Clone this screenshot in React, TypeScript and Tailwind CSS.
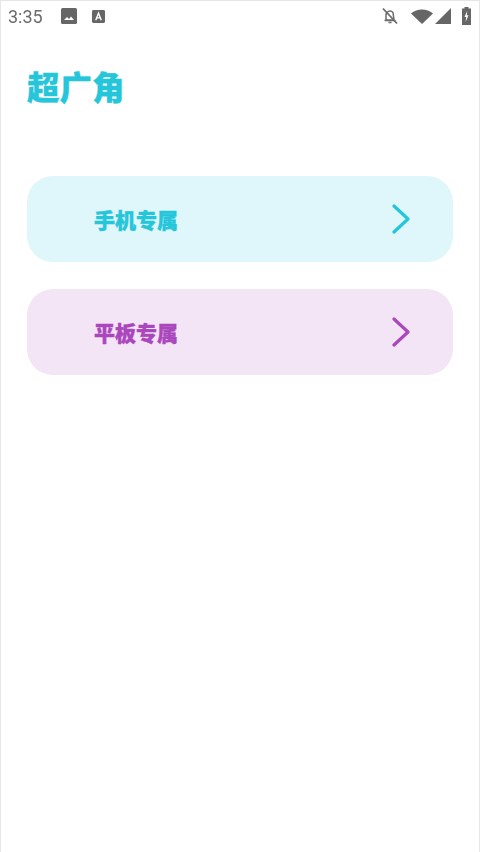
const cjk = "font-['Noto_Sans_CJK_SC','Noto_Sans',sans-serif]";

const Chevron = ({ className }: { className: string }) => (
  <svg viewBox="0 0 18 30" className={`w-[18px] h-[30px] ${className}`} fill="none" stroke="currentColor" strokeWidth="3.2" strokeLinecap="round" strokeLinejoin="round">
    <path d="M2 2 L16 15 L2 28" />
  </svg>
);

const StatusBar = () => (
  <div className="h-[32px] flex items-center pl-[7px] text-[#6b6b6b] blur-[0.5px]">
    <span className="w-[37px] text-[18px] font-['Roboto',sans-serif] leading-none">3:35</span>
    <svg viewBox="0 0 16 16" className="w-[16px] h-[16px] ml-[16px] mb-[2px]">
      <rect x="0" y="0" width="16" height="16" rx="1.5" fill="#666" />
      <path d="M3 12 L6 9 L8 11 L10 8.5 L13 12 Z" fill="#fff" />
    </svg>
    <svg viewBox="0 0 14 14" className="w-[13px] h-[13px] ml-[15px] mb-[2px]">
      <rect x="0" y="0" width="14" height="14" rx="1.5" fill="#666" />
      <path d="M4 11 L7 3.5 L10 11 M5.2 8.5 H8.8" fill="none" stroke="#fff" strokeWidth="1.5" />
    </svg>
    <div className="ml-auto flex items-center pr-[8px] mb-[2px]">
      <svg viewBox="0 0 18 18" className="w-[18px] h-[18px] mr-[12px]" fill="none" stroke="#6b6b6b" strokeWidth="1.5">
        <path d="M5 13 V8 a4 4 0 0 1 7-2.5 L13 13 Z M3.5 13.5 H14.5 M7.5 15.5 H10.5" />
        <path d="M2 1.5 L16 16.5" strokeWidth="1.8" />
      </svg>
      <svg viewBox="0 0 22 15" className="w-[22px] h-[15px]">
        <path d="M0 4.5 C6 -1 16 -1 22 4.5 L11 15 Z" fill="#666" />
      </svg>
      <svg viewBox="0 0 16 16" className="w-[16px] h-[16px] ml-[2px]">
        <path d="M16 0 V16 H0 Z" fill="#666" />
      </svg>
      <svg viewBox="0 0 9 18" className="w-[9px] h-[18px] ml-[11px]">
        <path d="M2.5 0 H6.5 V1.5 H9 V18 H0 V1.5 H2.5 Z" fill="#666" />
        <path d="M5.2 4 L2.5 10 H4.2 L3.6 15 L6.5 8.2 H4.8 Z" fill="#fff" />
      </svg>
    </div>
  </div>
);

const MenuCard = ({ label, bg, text }: { label: string; bg: string; text: string }) => (
  <div className={`h-[86px] rounded-[26px] flex items-center justify-between pl-[67px] pr-[43px] ${bg}`}>
    <span className={`text-[21px] leading-none font-black [-webkit-text-stroke:0.4px_currentColor] ${cjk} ${text}`}>{label}</span>
    <Chevron className={text} />
  </div>
);

export default function App() {
  return (
    <div className="w-[480px] h-[852px] bg-white border-x border-t border-[#e6e6e6] overflow-hidden">
      <StatusBar />
      <div className="px-[26px]">
        <h1 className={`mt-[37px] text-[32.5px] leading-[32px] font-black [-webkit-text-stroke:0.3px_currentColor] text-[#26c6da] ${cjk}`}>超广角</h1>
        <div className="mt-[74px] flex flex-col gap-[27px]">
          <MenuCard label="手机专属" bg="bg-[#dff6fa]" text="text-[#26c6da]" />
          <MenuCard label="平板专属" bg="bg-[#f3e5f6]" text="text-[#ab47bc]" />
        </div>
      </div>
    </div>
  );
}
